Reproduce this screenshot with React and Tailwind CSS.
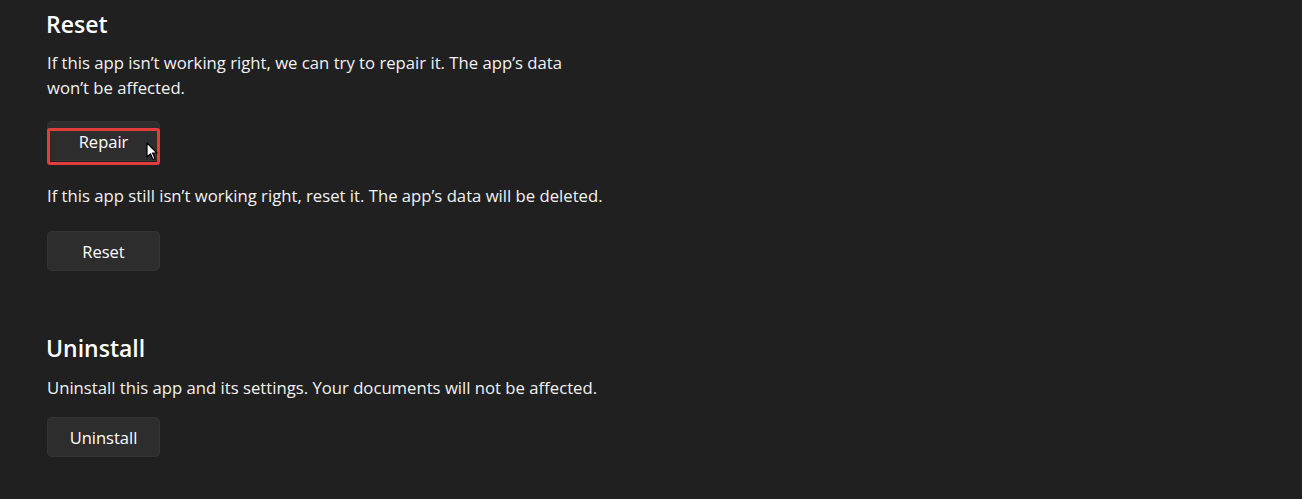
import React from 'react';

const font = { fontFamily: '"Open Sans", "Noto Sans", sans-serif' };

const Cursor = () => (
  <svg className="absolute left-[99px] top-[21px]" width="12" height="19" viewBox="0 0 12 19">
    <path d="M1 1 L1 15 L4.5 11.8 L7 17.5 L9 16.6 L6.6 11 L11 11 Z" fill="#ffffff" stroke="#000000" strokeWidth="1.2" strokeLinejoin="round" />
  </svg>
);

const Button = ({ label, children }) => (
  <div className="relative w-[113px]">
    <button className="w-[113px] h-[40px] pt-[2px] rounded-[5px] bg-[#2d2d2d] border border-[#353535] text-white text-[16.5px]">
      {label}
    </button>
    {children}
  </div>
);

const App = () => {
  return (
    <div className="min-h-[499px] w-[1302px] bg-[#202020] text-white pl-[47px] overflow-hidden" style={font}>
      <h2 className="text-[23px] font-semibold leading-[30px] pt-[9px] -ml-[1px]">Reset</h2>
      <p className="mt-[11px] text-[16.7px] leading-[25px] text-[#f2f2f2]">
        If this app isn’t working right, we can try to repair it. The app’s data
        <br />
        won’t be affected.
      </p>
      <div className="mt-[21px]">
        <Button label="Repair">
          <div className="absolute left-0 top-[7px] w-[113px] h-[37px] border-[3px] border-[#e43d3d] rounded-[3px] pointer-events-none" />
          <Cursor />
        </Button>
      </div>
      <p className="mt-[22px] text-[16.7px] leading-[25px] text-[#f2f2f2]">
        If this app still isn’t working right, reset it. The app’s data will be deleted.
      </p>
      <div className="mt-[23px]">
        <Button label="Reset" />
      </div>
      <h2 className="mt-[62px] text-[23px] font-semibold leading-[30px] -ml-[1px]">Uninstall</h2>
      <p className="mt-[12px] text-[16.7px] leading-[25px] text-[#f2f2f2]">
        Uninstall this app and its settings. Your documents will not be affected.
      </p>
      <div className="mt-[17px]">
        <Button label="Uninstall" />
      </div>
    </div>
  );
};

export default App;
